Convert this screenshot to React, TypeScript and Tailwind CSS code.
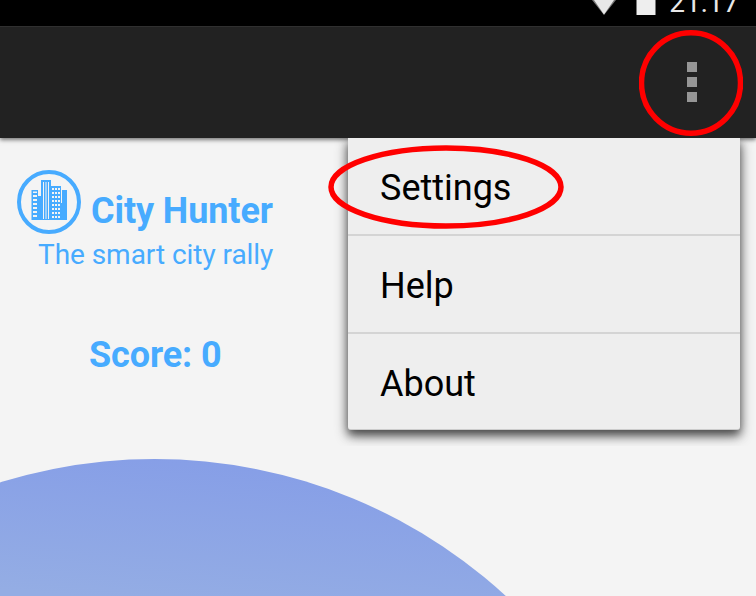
const ROBOTO = "font-['Roboto',sans-serif]";

function StatusBar() {
  return (
    <div className="flex h-[26px] shrink-0 justify-end overflow-hidden bg-black pr-[17px]">
      <svg className="h-[26px] w-[75px] shrink-0" viewBox="0 0 75 26">
        <path d="M7 0h24L19 15Z" fill="#777" />
        <path d="M9 0h20L19 14.500Z" fill="#e8e8e8" />
        <rect x="51.500" y="0" width="19" height="15" fill="#eee" />
      </svg>
      <div className="mt-[-13px] ml-[9px] h-8 text-[28px] leading-8 text-[#e8e8e8]">21:17</div>
    </div>
  );
}

function ActionBar() {
  return (
    <div className="flex h-28 shrink-0 justify-end border-t border-[#303030] bg-[#222] pr-[13px] shadow-[0_2px_4px_rgba(0,0,0,0.5)]">
      <div className="relative mt-[3px] flex size-[104px] items-center justify-center">
        <div className="ml-0.5 flex flex-col gap-[5px]">
          <i className="size-[10px] bg-[#969696]" />
          <i className="size-[10px] bg-[#969696]" />
          <i className="size-[10px] bg-[#969696]" />
        </div>
        <svg className="absolute inset-0 z-20" width="104" height="106" viewBox="0 0 104 106">
          <ellipse cx="52" cy="53" rx="49.5" ry="50.2" fill="none" stroke="#f00" strokeWidth="5.500" />
        </svg>
      </div>
    </div>
  );
}

const windowRows = [188, 192, 196, 200, 204, 208, 212, 216];

function CityLogo() {
  return (
    <svg width="64" height="64" viewBox="17 170 64 64" fill="#47abff" className="shrink-0">
      <circle cx="49" cy="202" r="30" fill="none" stroke="#47abff" strokeWidth="4" />
      <path d="M31.5 190H38v30h-6.500ZM37 196h5v24h-5ZM41 180h10v40H41ZM51 186h10v34H51ZM61 203h1v-13h5v30h-6Z" />
      <g fill="#f4f4f4">
        <path d="M33 191.500h4v1.500h-4ZM33 195h4v2h-4ZM33 199h4v2h-4ZM33 203h4v2h-4ZM33 207h4v2h-4ZM33 211h4v2h-4ZM33 215h4v2h-4Z" />
        <path d="M43 182h1v37h-1ZM45.500 182h1v37h-1ZM48 182h1v37h-1Z" />
        {windowRows.map((y) => (
          <path key={y} d={`M52 ${y}h2v2h-2ZM55 ${y}h2v2h-2ZM58 ${y}h2v2h-2Z`} />
        ))}
      </g>
    </svg>
  );
}

function Menu() {
  return (
    <div className="ml-auto h-[308px] w-[428px] shrink-0 overflow-hidden pr-4 pl-5">
      <div className="relative h-[292px] w-[392px] rounded-b-[3px] border-b border-[#ccc] bg-[#eee] shadow-[0_5px_8px_rgba(0,0,0,0.5),0_5px_14px_rgba(0,0,0,0.45)]">
        {["Settings", "Help", "About"].map((label) => (
          <div key={label} className="h-[98px] border-b-2 border-[#d4d4d4] pl-8 text-[36px] leading-[100px] text-black last-of-type:h-[95px] last-of-type:border-0">
            {label}
          </div>
        ))}
        <svg className="absolute top-[7px] left-[-20px]" width="236" height="84" viewBox="0 0 236 84">
          <ellipse cx="118" cy="42" rx="115" ry="39" fill="none" stroke="#f00" strokeWidth="5.500" />
        </svg>
      </div>
    </div>
  );
}

export default function App() {
  return (
    <div className={`flex h-[596px] w-[756px] flex-col overflow-hidden bg-[#f4f4f4] ${ROBOTO}`}>
      <StatusBar />
      <ActionBar />
      <div className="relative flex flex-1 items-start overflow-hidden">
        <svg className="absolute inset-0" width="756" height="458" viewBox="0 138 756 458">
          <defs>
            <linearGradient id="disc" gradientUnits="userSpaceOnUse" x1="190" y1="455" x2="175" y2="606">
              <stop offset="0" stopColor="#869ee7" />
              <stop offset="1" stopColor="#94ade4" />
            </linearGradient>
          </defs>
          <circle cx="154.500" cy="978" r="519" fill="url(#disc)" />
        </svg>
        <div className="relative flex w-[310px] shrink-0 flex-col text-[#47abff]">
          <div className="flex h-24 pt-8 pl-[17px]">
            <CityLogo />
            <div className="mt-5 ml-2.5 text-[36px] leading-[42px] font-bold tracking-[-0.1px] whitespace-nowrap">City Hunter</div>
          </div>
          <div className="mt-1 pl-[38px] text-[28px] leading-[33px] tracking-[-0.05px] whitespace-nowrap">The smart city rally</div>
          <div className="mt-[63px] pl-[89px] text-[36px] leading-[42px] font-bold tracking-[-0.1px]">Score: 0</div>
        </div>
        <Menu />
      </div>
    </div>
  );
}
